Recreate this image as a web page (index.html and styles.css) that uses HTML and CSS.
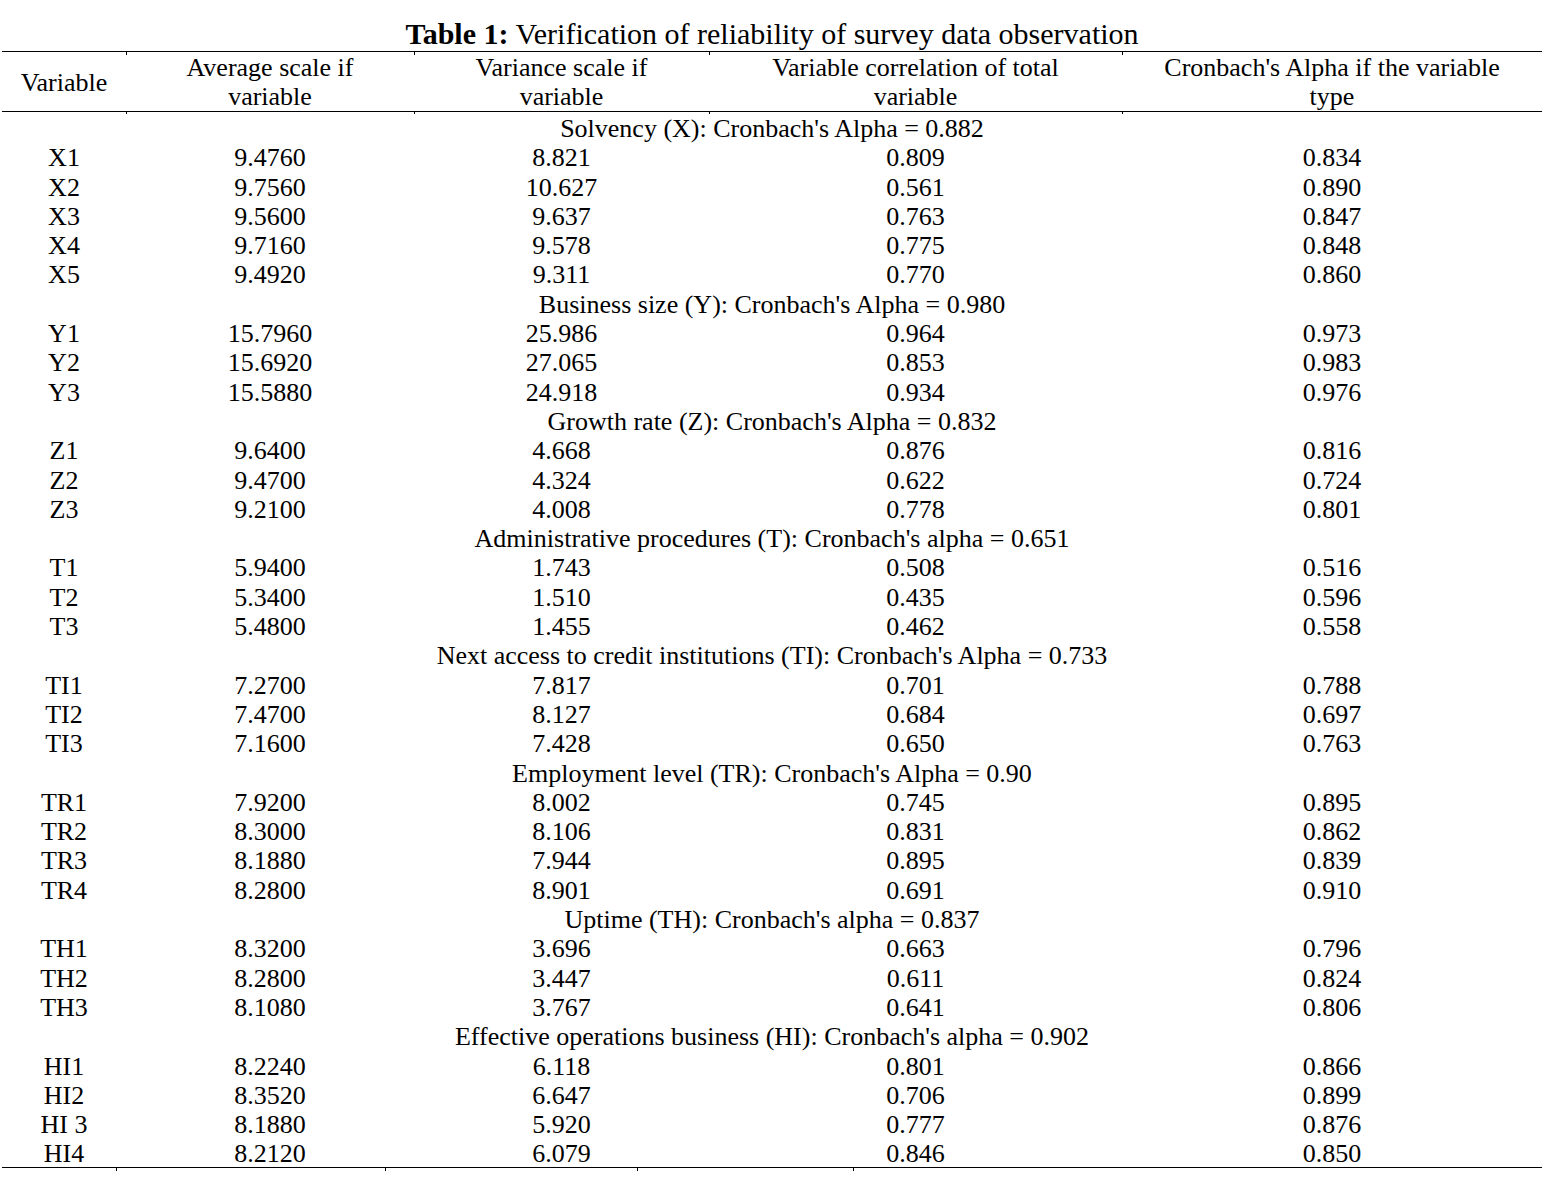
FILE: index.html
```html
<!DOCTYPE html>
<html lang="en">
<head>
<meta charset="utf-8">
<title>Table 1</title>
<link rel="stylesheet" href="styles.css">
</head>
<body>
<div class="page">
  <h1 class="title"><b>Table 1:</b> Verification of reliability of survey data observation</h1>
  <table class="data">
    <colgroup>
      <col class="c1"><col class="c2"><col class="c3"><col class="c4"><col class="c5">
    </colgroup>
    <thead>
      <tr>
        <th>Variable</th>
        <th class="tick">Average scale if<br>variable</th>
        <th class="tick">Variance scale if<br>variable</th>
        <th class="tick">Variable correlation of total<br>variable</th>
        <th class="tick">Cronbach's Alpha if the variable<br>type</th>
      </tr>
    </thead>
    <tbody>
      <tr class="sec"><td colspan="5">Solvency (X): Cronbach's Alpha = 0.882</td></tr>
      <tr><td>X1</td><td>9.4760</td><td>8.821</td><td>0.809</td><td>0.834</td></tr>
      <tr><td>X2</td><td>9.7560</td><td>10.627</td><td>0.561</td><td>0.890</td></tr>
      <tr><td>X3</td><td>9.5600</td><td>9.637</td><td>0.763</td><td>0.847</td></tr>
      <tr><td>X4</td><td>9.7160</td><td>9.578</td><td>0.775</td><td>0.848</td></tr>
      <tr><td>X5</td><td>9.4920</td><td>9.311</td><td>0.770</td><td>0.860</td></tr>
      <tr class="sec"><td colspan="5">Business size (Y): Cronbach's Alpha = 0.980</td></tr>
      <tr><td>Y1</td><td>15.7960</td><td>25.986</td><td>0.964</td><td>0.973</td></tr>
      <tr><td>Y2</td><td>15.6920</td><td>27.065</td><td>0.853</td><td>0.983</td></tr>
      <tr><td>Y3</td><td>15.5880</td><td>24.918</td><td>0.934</td><td>0.976</td></tr>
      <tr class="sec"><td colspan="5">Growth rate (Z): Cronbach's Alpha = 0.832</td></tr>
      <tr><td>Z1</td><td>9.6400</td><td>4.668</td><td>0.876</td><td>0.816</td></tr>
      <tr><td>Z2</td><td>9.4700</td><td>4.324</td><td>0.622</td><td>0.724</td></tr>
      <tr><td>Z3</td><td>9.2100</td><td>4.008</td><td>0.778</td><td>0.801</td></tr>
      <tr class="sec"><td colspan="5">Administrative procedures (T): Cronbach's alpha = 0.651</td></tr>
      <tr><td>T1</td><td>5.9400</td><td>1.743</td><td>0.508</td><td>0.516</td></tr>
      <tr><td>T2</td><td>5.3400</td><td>1.510</td><td>0.435</td><td>0.596</td></tr>
      <tr><td>T3</td><td>5.4800</td><td>1.455</td><td>0.462</td><td>0.558</td></tr>
      <tr class="sec"><td colspan="5">Next access to credit institutions (TI): Cronbach's Alpha = 0.733</td></tr>
      <tr><td>TI1</td><td>7.2700</td><td>7.817</td><td>0.701</td><td>0.788</td></tr>
      <tr><td>TI2</td><td>7.4700</td><td>8.127</td><td>0.684</td><td>0.697</td></tr>
      <tr><td>TI3</td><td>7.1600</td><td>7.428</td><td>0.650</td><td>0.763</td></tr>
      <tr class="sec"><td colspan="5">Employment level (TR): Cronbach's Alpha = 0.90</td></tr>
      <tr><td>TR1</td><td>7.9200</td><td>8.002</td><td>0.745</td><td>0.895</td></tr>
      <tr><td>TR2</td><td>8.3000</td><td>8.106</td><td>0.831</td><td>0.862</td></tr>
      <tr><td>TR3</td><td>8.1880</td><td>7.944</td><td>0.895</td><td>0.839</td></tr>
      <tr><td>TR4</td><td>8.2800</td><td>8.901</td><td>0.691</td><td>0.910</td></tr>
      <tr class="sec"><td colspan="5">Uptime (TH): Cronbach's alpha = 0.837</td></tr>
      <tr><td>TH1</td><td>8.3200</td><td>3.696</td><td>0.663</td><td>0.796</td></tr>
      <tr><td>TH2</td><td>8.2800</td><td>3.447</td><td>0.611</td><td>0.824</td></tr>
      <tr><td>TH3</td><td>8.1080</td><td>3.767</td><td>0.641</td><td>0.806</td></tr>
      <tr class="sec"><td colspan="5">Effective operations business (HI): Cronbach's alpha = 0.902</td></tr>
      <tr><td>HI1</td><td>8.2240</td><td>6.118</td><td>0.801</td><td>0.866</td></tr>
      <tr><td>HI2</td><td>8.3520</td><td>6.647</td><td>0.706</td><td>0.899</td></tr>
      <tr><td>HI 3</td><td>8.1880</td><td>5.920</td><td>0.777</td><td>0.876</td></tr>
      <tr><td>HI4</td><td>8.2120</td><td>6.079</td><td>0.846</td><td>0.850</td></tr>
    </tbody>
  </table>
  <div class="foot-ticks">
    <span class="ft t1"></span>
    <span class="ft t2"></span>
    <span class="ft t3"></span>
    <span class="ft t4"></span>
  </div>
</div>
</body>
</html>
```

FILE: styles.css
```css
html, body {
  margin: 0;
  padding: 0;
  background: #ffffff;
}

body {
  font-family: "Liberation Serif", "Times New Roman", serif;
  color: #000000;
  font-size: 26px;
}

.page {
  width: 1540px;
  margin-left: 2px;
  padding-top: 18px;
}

.title {
  margin: 0;
  font-size: 30px;
  font-weight: normal;
  line-height: 32px;
  text-align: center;
  height: 33px;
}

.title b {
  font-weight: bold;
}

.data {
  width: 1540px;
  border-collapse: collapse;
  table-layout: fixed;
  border-top: 1px solid #000;
  border-bottom: 1px solid #000;
}

.c1 { width: 124px; }
.c2 { width: 288px; }
.c3 { width: 295px; }
.c4 { width: 413px; }
.c5 { width: 420px; }

.data th {
  font-weight: normal;
  line-height: 29px;
  padding: 1px 0 0 0;
  height: 58px;
  text-align: center;
  vertical-align: middle;
  border-bottom: 1px solid #000;
  position: relative;
}

.data th.tick::before,
.data th.tick::after {
  content: "";
  position: absolute;
  left: 0;
  width: 1px;
  height: 3px;
  background: #000;
}

.data th.tick::before { top: 0; }
.data th.tick::after { bottom: -3px; }

.data td {
  padding: 4px 0 0 0;
  line-height: 25.3px;
  height: 25.3px;
  text-align: center;
  white-space: nowrap;
}

.foot-ticks {
  position: relative;
  height: 4px;
}

.ft {
  position: absolute;
  top: 0;
  width: 1px;
  height: 3px;
  background: #000;
}

.t1 { left: 114px; }
.t2 { left: 383px; }
.t3 { left: 635px; }
.t4 { left: 851px; }
```
